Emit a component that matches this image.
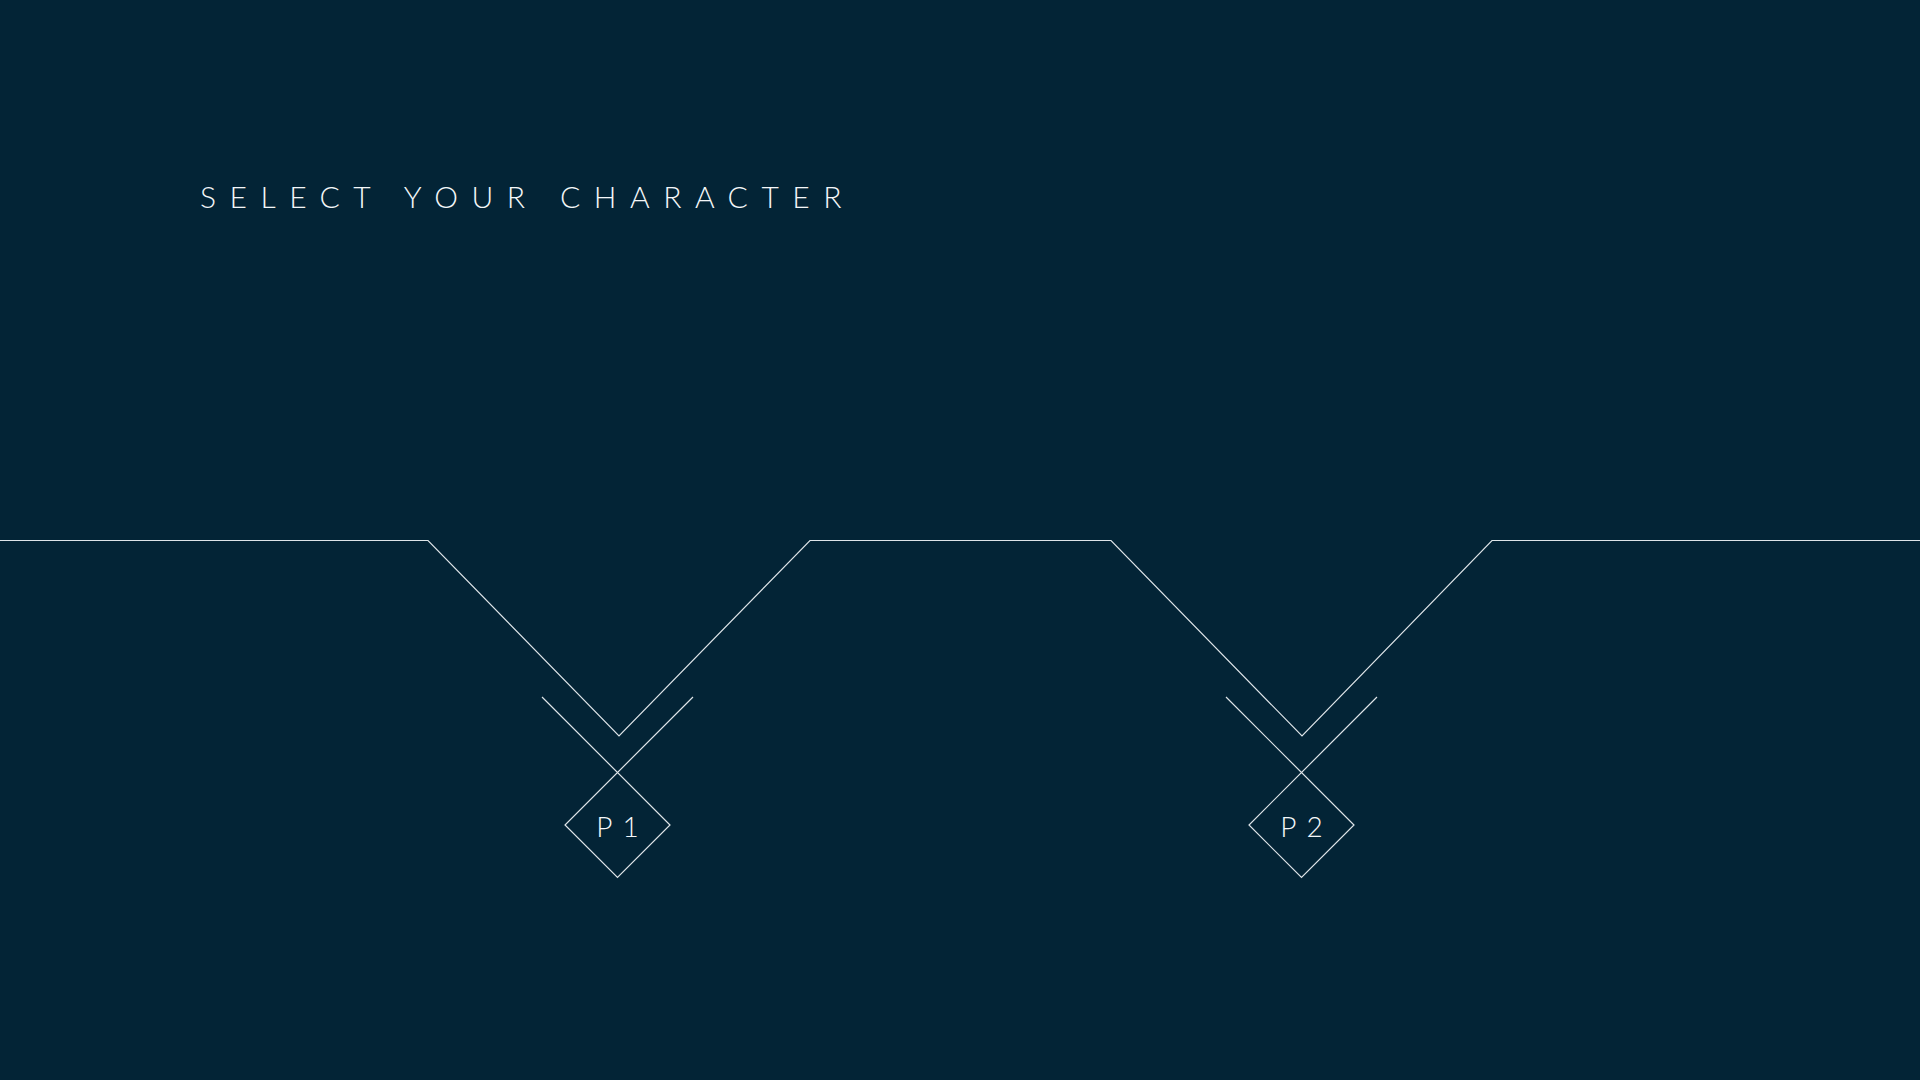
const LINE = "#dfe5e9";
const PLAYERS = [
  { id: "P1", cx: 617.5 },
  { id: "P2", cx: 1301.5 },
];

export default function App() {
  return (
    <div className="w-full h-screen overflow-hidden bg-[#032436] text-white font-['Lato','Open_Sans',sans-serif]">
      <div className="pl-[200px] pt-[181px]">
        <h1 className="text-[30px] leading-[30px] font-light tracking-[0.45em] text-[#f4f7f9]">
          SELECT YOUR CHARACTER
        </h1>
      </div>
      <svg className="block mt-[289px]" width="1920" height="400" viewBox="0 0 1920 400" fill="none">
        <path
          d="M0 40.5 H428 L619 236 L810 40.5 H1111 L1302 236 L1492 40.5 H1920"
          stroke={LINE}
          strokeWidth="1.2"
        />
        {PLAYERS.map((p) => (
          <g key={p.id}>
            <path
              d={`M${p.cx - 75.5} 197 L${p.cx + 52.5} 325 L${p.cx} 377.5 L${p.cx - 52.5} 325 L${p.cx + 75.5} 197`}
              stroke={LINE}
              strokeWidth="1.2"
            />
            <text
              x={p.cx + 5}
              y="337"
              textAnchor="middle"
              fill="#f4f7f9"
              fontSize="28"
              fontWeight="300"
              letterSpacing="10"
              className="font-['Lato',sans-serif]"
            >
              {p.id}
            </text>
          </g>
        ))}
      </svg>
    </div>
  );
}
